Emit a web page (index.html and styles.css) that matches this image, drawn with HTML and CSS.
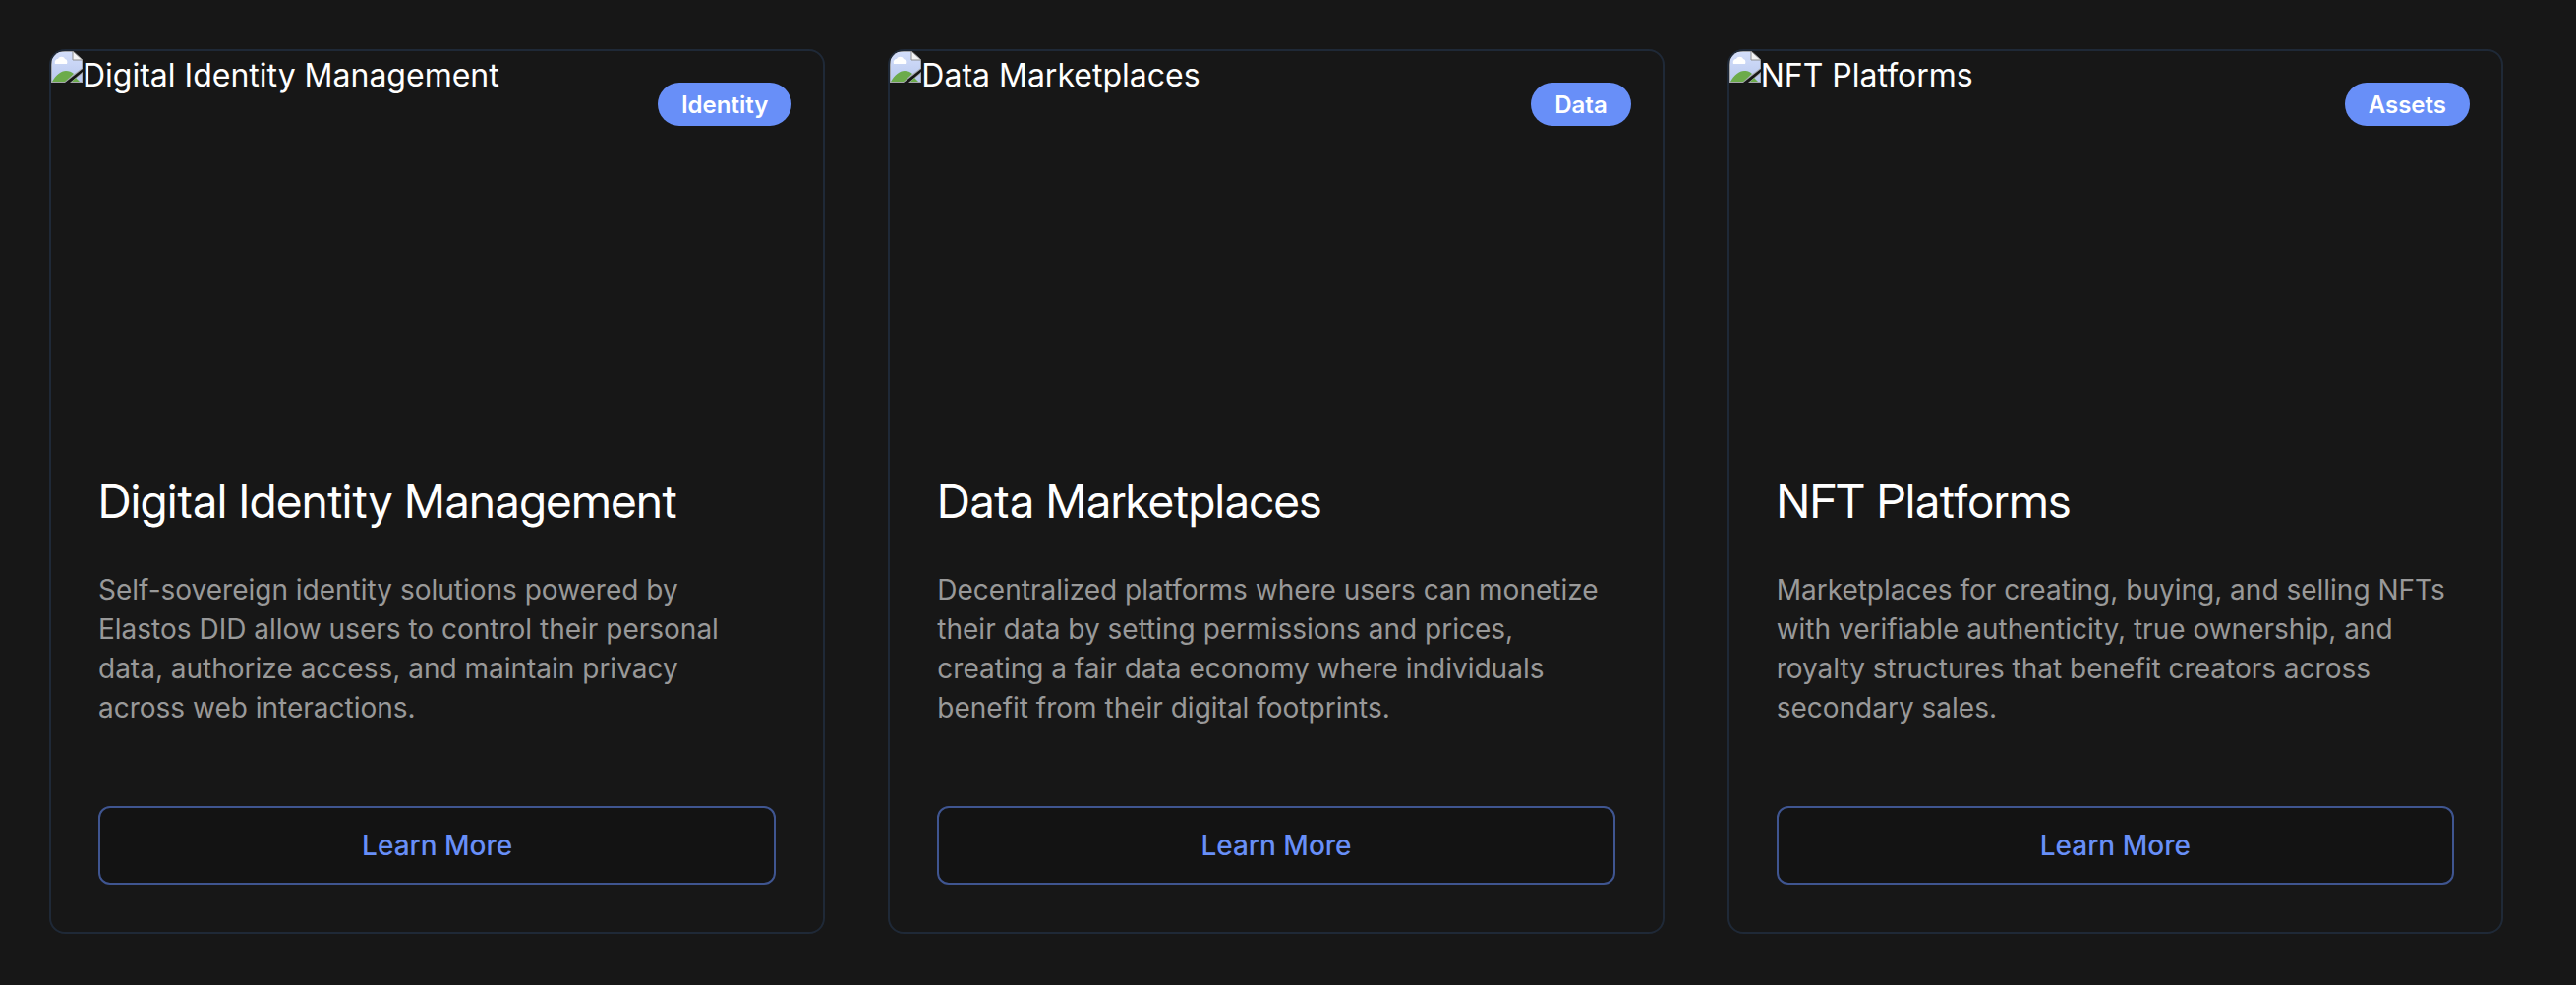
FILE: index.html
```html
<!DOCTYPE html>
<html lang="en">
<head>
<meta charset="utf-8">
<meta name="viewport" content="width=device-width, initial-scale=1">
<title>Use cases</title>
<link rel="stylesheet" href="styles.css">
</head>
<body>
<svg class="sprite" aria-hidden="true">
  <defs>
    <linearGradient id="sky" x1="0" y1="0" x2="0" y2="1">
      <stop offset="0" stop-color="#d3defa"/>
      <stop offset="1" stop-color="#b9c8ee"/>
    </linearGradient>
    <symbol id="missing" viewBox="0 0 32 32">
      <path d="M0 0H22L32 9V18L14 32H0Z" fill="#a6a8ad"/>
      <path d="M1 1H22V9H31V17.500L13 31H1Z" fill="url(#sky)"/>
      <path d="M1 31C5 24 10 20 15 20c3 0 6 1 8 3L14 31Z" fill="#6cab4b"/>
      <path d="M4 13c-1-3 1-5 3-5 1-3 6-3 7 0 2 0 3 3 2 5Z" fill="#fff"/>
      <path d="M22 0L32 9H22Z" fill="#f4f4f4" stroke="#8d8d8d"/>
      <path d="M32 21V32H19Z" fill="#a6a8ad"/>
      <path d="M31 23V31H21Z" fill="#b9c8ee"/>
      <path d="M25 27l4 4H21Z" fill="#6cab4b"/>
    </symbol>
  </defs>
</svg>
<main class="cards">
  <article class="card">
    <div class="media">
      <svg class="media-icon" aria-hidden="true"><use href="#missing"/></svg>
      <span class="media-alt">Digital Identity Management</span>
      <span class="badge">Identity</span>
    </div>
    <div class="body">
      <h2 class="title">Digital Identity Management</h2>
      <p class="text">Self-sovereign identity solutions powered by Elastos DID allow users to control their personal data, authorize access, and maintain privacy<br>across web interactions.</p>
      <button class="more" type="button">Learn More</button>
    </div>
  </article>
  <article class="card">
    <div class="media">
      <svg class="media-icon" aria-hidden="true"><use href="#missing"/></svg>
      <span class="media-alt">Data Marketplaces</span>
      <span class="badge">Data</span>
    </div>
    <div class="body">
      <h2 class="title">Data Marketplaces</h2>
      <p class="text">Decentralized platforms where users can monetize their data by setting permissions and prices, creating a fair data economy where individuals benefit from their digital footprints.</p>
      <button class="more" type="button">Learn More</button>
    </div>
  </article>
  <article class="card">
    <div class="media">
      <svg class="media-icon" aria-hidden="true"><use href="#missing"/></svg>
      <span class="media-alt">NFT Platforms</span>
      <span class="badge">Assets</span>
    </div>
    <div class="body">
      <h2 class="title">NFT Platforms</h2>
      <p class="text">Marketplaces for creating, buying, and selling NFTs with verifiable authenticity, true ownership, and royalty structures that benefit creators across secondary sales.</p>
      <button class="more" type="button">Learn More</button>
    </div>
  </article>
</main>
</body>
</html>
```
FILE: styles.css
```css
* {
  box-sizing: border-box;
}

body {
  margin: 0;
  background: #171717;
  color: #fff;
  font-family: Inter, "Liberation Sans", sans-serif;
}

.sprite {
  position: absolute;
  width: 0;
  height: 0;
}

.cards {
  display: grid;
  grid-template-columns: repeat(3, 1fr);
  gap: 64px;
  padding: 50px 74px 50px 50px;
}

.card {
  display: flex;
  flex-direction: column;
  border: 2px solid #1f2937;
  border-radius: 16px;
  overflow: hidden;
}

.media {
  position: relative;
  display: flex;
  align-items: flex-start;
  height: 380px;
}

.media-icon {
  flex: none;
  width: 32px;
  height: 32px;
}

.media-alt {
  font-size: 32px;
  line-height: 50px;
}

.badge {
  position: absolute;
  top: 32px;
  right: 32px;
  padding: 5px 24px 3px;
  border-radius: 22px;
  background: #688ff8;
  font-size: 24px;
  font-weight: 600;
  line-height: 36px;
}

.body {
  display: flex;
  flex: 1;
  flex-direction: column;
  padding: 48px;
}

.title {
  margin: 0 0 40px;
  font-family: "Inter Display", Roboto, sans-serif;
  font-size: 48px;
  font-weight: 400;
  line-height: 60px;
}

.text {
  margin: 0 0 80px;
  color: #999;
  font-size: 28px;
  line-height: 40px;
}

.more {
  margin-top: auto;
  padding: 18px 32px;
  border: 2px solid #3f5590;
  border-radius: 12px;
  background: #131313;
  color: #688ff8;
  font: 500 28px/40px Inter, "Liberation Sans", sans-serif;
  cursor: pointer;
}
```
